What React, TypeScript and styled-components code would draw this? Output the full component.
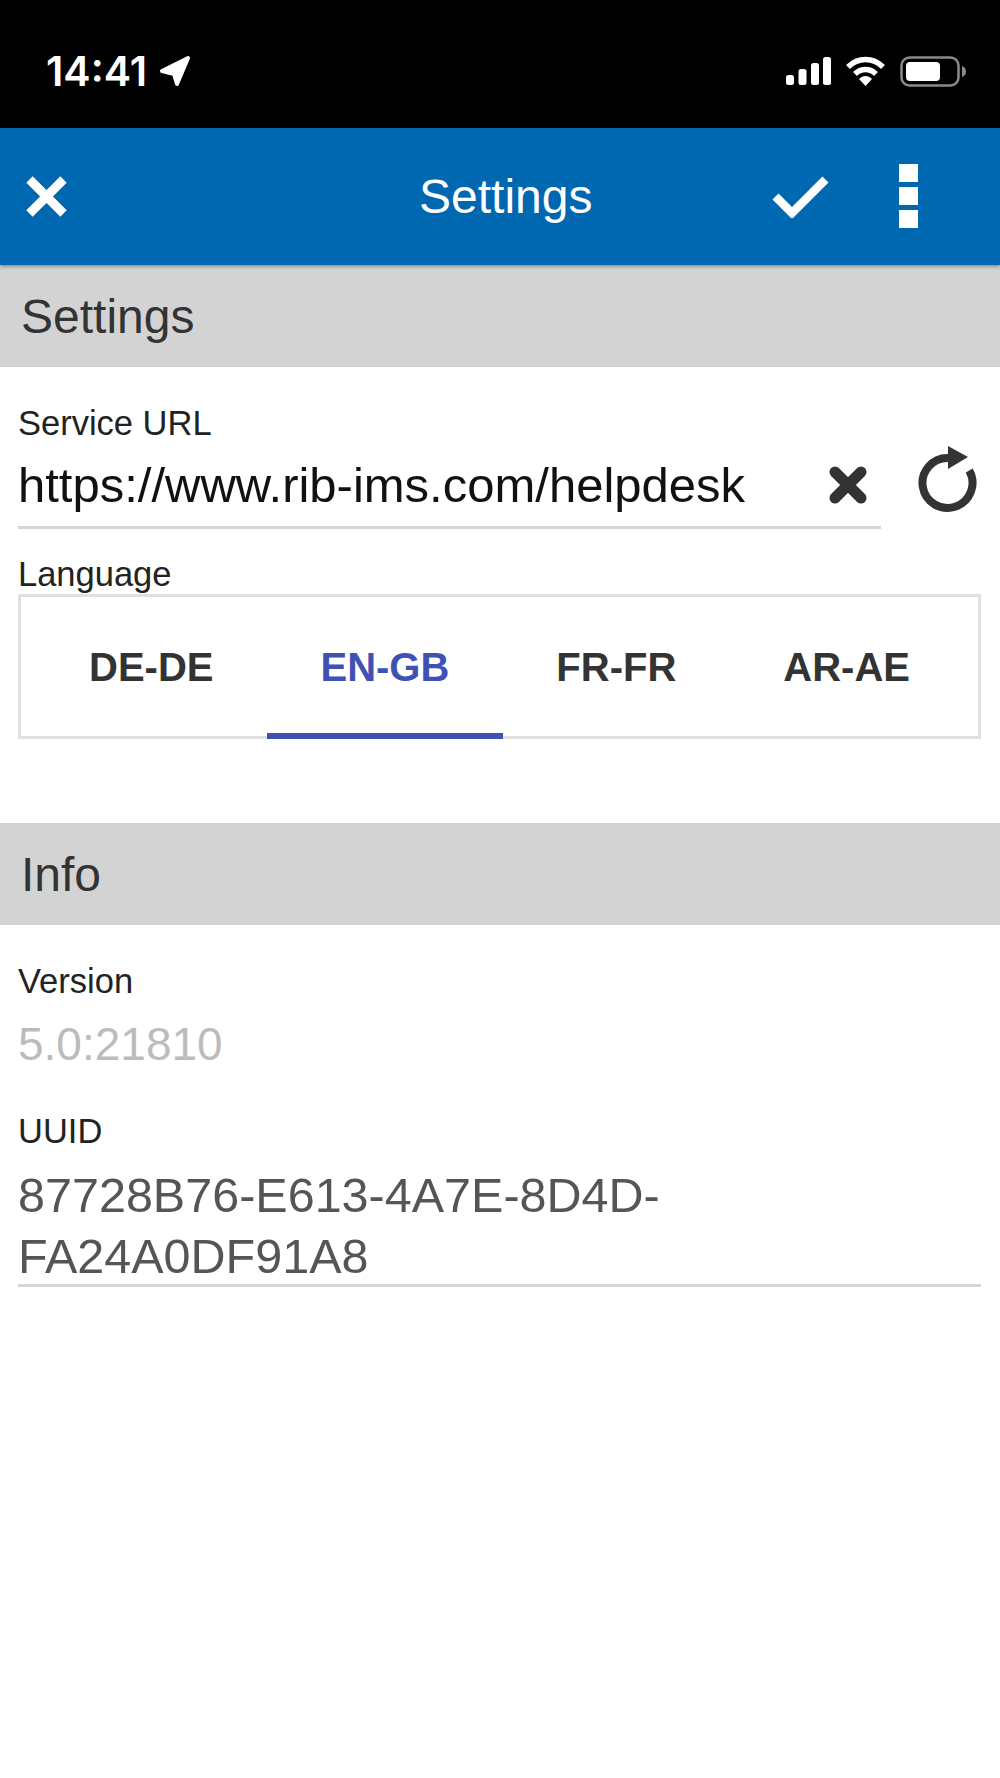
import React from "react";
import styled, { createGlobalStyle } from "styled-components";

const GlobalStyle = createGlobalStyle`
  html, body {
    margin: 0;
    padding: 0;
    background: #ffffff;
    font-family: "Liberation Sans", Arial, sans-serif;
  }
`;

const Page = styled.div`
  width: 1000px;
  height: 1778px;
  overflow: hidden;
  background: #ffffff;
`;

const StatusBar = styled.div`
  height: 128px;
  background: #000000;
  display: flex;
  align-items: center;
  padding: 14px 34px 0 46px;
  box-sizing: border-box;
  color: #ffffff;
`;

const Clock = styled.span`
  font-family: Inter, "Liberation Sans", sans-serif;
  font-weight: 600;
  font-size: 41px;
  line-height: 44px;
  margin-right: 12px;
`;

const StatusIcons = styled.div`
  margin-left: auto;
  display: flex;
  align-items: center;
  gap: 14px;
`;

const Toolbar = styled.header`
  position: relative;
  z-index: 1;
  height: 137px;
  background: #0067b1;
  box-shadow: 0 1px 4px rgba(0, 0, 0, 0.45);
  display: flex;
  align-items: center;
  padding-left: 26px;
  box-sizing: border-box;
  color: #ffffff;
`;

const ToolbarTitle = styled.h1`
  margin: 0 0 0 352px;
  width: 353px;
  font-size: 48px;
  font-weight: 400;
  line-height: 60px;
`;

const MenuDots = styled.div`
  margin: -2px 0 0 70px;
  display: flex;
  flex-direction: column;
  gap: 5px;
`;

const MenuDot = styled.span`
  display: block;
  width: 19px;
  height: 18px;
  background: #ffffff;
`;

const SectionBar = styled.h2`
  margin: 0;
  height: 102px;
  background: #d3d3d3;
  color: #333333;
  font-size: 48px;
  font-weight: 400;
  line-height: 104px;
  padding-left: 21px;
`;

const Form = styled.section<{ $height: number }>`
  height: ${(p) => p.$height}px;
  padding: 36px 19px 0 18px;
  box-sizing: border-box;
`;

const FieldLabel = styled.div`
  font-size: 34.5px;
  line-height: 40px;
  color: #222222;
`;

const LanguageLabel = styled(FieldLabel)`
  margin-top: 25px;
`;

const UrlRow = styled.div`
  display: flex;
  align-items: flex-start;
`;

const UrlInput = styled.div`
  width: 863px;
  height: 86px;
  box-sizing: border-box;
  border-bottom: 3px solid #d6d6d6;
  display: flex;
  align-items: flex-start;
  justify-content: space-between;
  padding: 14px 14px 0 0;
`;

const UrlText = styled.span`
  font-size: 49px;
  line-height: 56px;
  color: #111111;
`;

const TabBox = styled.div`
  height: 145px;
  box-sizing: border-box;
  border: 3px solid #e0e0e0;
  display: flex;
  justify-content: center;
`;

const Tab = styled.div<{ $active?: boolean }>`
  padding: 4px 53.5px 0;
  display: flex;
  align-items: center;
  height: 142px;
  box-sizing: border-box;
  font-size: 40px;
  font-weight: 700;
  color: ${(p) => (p.$active ? "#3f51b5" : "#333333")};
  border-bottom: 6px solid ${(p) => (p.$active ? "#3f51b5" : "transparent")};
`;

const VersionValue = styled.div`
  font-size: 46px;
  line-height: 60px;
  color: #bcbcbc;
  margin: 13px 0 37px;
`;

const UuidValue = styled.div`
  font-size: 48.5px;
  line-height: 60.5px;
  color: #555555;
  width: 700px;
  padding-top: 14px;
`;

const UuidRule = styled.div`
  height: 3px;
  background: #d6d6d6;
  margin-top: -2px;
`;

const TABS = ["DE-DE", "EN-GB", "FR-FR", "AR-AE"];

const LocationIcon = () => (
  <svg width="32" height="32" viewBox="0 0 32 32" style={{ display: "block" }}>
    <path
      d="M29 3 3 16 15 19 18 29Z"
      fill="#fff"
      stroke="#fff"
      strokeWidth="4"
      strokeLinejoin="round"
    />
  </svg>
);

const SignalIcon = () => (
  <svg width="45" height="28" viewBox="0 0 45 28" style={{ display: "block" }}>
    <rect x="0" y="18" width="8" height="10" rx="2.5" fill="#fff" />
    <rect x="12.5" y="12" width="8" height="16" rx="2.5" fill="#fff" />
    <rect x="25" y="6" width="8" height="22" rx="2.5" fill="#fff" />
    <rect x="37" y="0" width="8" height="28" rx="2.5" fill="#fff" />
  </svg>
);

const WifiIcon = () => (
  <svg width="41" height="30" viewBox="0 0 41 30" style={{ display: "block" }}>
    <path d="M3 11C13 1 28 1 38 11" fill="none" stroke="#fff" strokeWidth="5.5" />
    <path d="M10 18C16 12 25 12 31 18" fill="none" stroke="#fff" strokeWidth="5.5" />
    <path d="M14 23C18 19 23 19 27 23L20.5 30Z" fill="#fff" />
  </svg>
);

const BatteryIcon = () => (
  <svg width="66" height="31" viewBox="0 0 66 31" style={{ display: "block" }}>
    <rect x="1.5" y="1.5" width="57" height="28" rx="8" fill="none" stroke="#8a8a8a" strokeWidth="2.5" />
    <rect x="6" y="6" width="34" height="19" rx="4" fill="#fff" />
    <path d="M62 10C65 11 66 13 66 15.5S65 20 62 21Z" fill="#8a8a8a" />
  </svg>
);

const CloseIcon = () => (
  <svg width="41" height="41" viewBox="0 0 41 41" style={{ display: "block" }}>
    <path d="M3.5 3.5 37.5 37.5M37.5 3.5 3.5 37.5" stroke="#fff" strokeWidth="9" />
  </svg>
);

const CheckIcon = () => (
  <svg width="57" height="42" viewBox="0 0 57 42" style={{ display: "block" }}>
    <path d="M3.5 20.5 20 37 53.5 3.5" fill="none" stroke="#fff" strokeWidth="8.5" />
  </svg>
);

const ClearIcon = () => (
  <svg width="38" height="38" viewBox="0 0 38 38" style={{ display: "block", marginTop: 9 }}>
    <path d="M6 6 32 32M32 6 6 32" stroke="#333" strokeWidth="11" strokeLinecap="round" />
  </svg>
);

const ReloadIcon = () => (
  <svg width="62" height="68" viewBox="0 0 62 68" style={{ display: "block", marginLeft: 37, marginTop: 3 }}>
    <path d="M51.2 24.6A25 25 0 1 1 30 12" fill="none" stroke="#333" strokeWidth="8" />
    <path d="M30 0 50 11 30 23Z" fill="#333" />
  </svg>
);

export default function App() {
  return (
    <Page>
      <GlobalStyle />
      <StatusBar>
        <Clock>14:41</Clock>
        <LocationIcon />
        <StatusIcons>
          <SignalIcon />
          <WifiIcon />
          <BatteryIcon />
        </StatusIcons>
      </StatusBar>
      <Toolbar>
        <CloseIcon />
        <ToolbarTitle>Settings</ToolbarTitle>
        <CheckIcon />
        <MenuDots>
          <MenuDot />
          <MenuDot />
          <MenuDot />
        </MenuDots>
      </Toolbar>
      <SectionBar>Settings</SectionBar>
      <Form $height={456}>
        <FieldLabel>Service URL</FieldLabel>
        <UrlRow>
          <UrlInput>
            <UrlText>https://www.rib-ims.com/helpdesk</UrlText>
            <ClearIcon />
          </UrlInput>
          <ReloadIcon />
        </UrlRow>
        <LanguageLabel>Language</LanguageLabel>
        <TabBox>
          {TABS.map((tab) => (
            <Tab key={tab} $active={tab === "EN-GB"}>
              {tab}
            </Tab>
          ))}
        </TabBox>
      </Form>
      <SectionBar>Info</SectionBar>
      <Form $height={400}>
        <FieldLabel>Version</FieldLabel>
        <VersionValue>5.0:21810</VersionValue>
        <FieldLabel>UUID</FieldLabel>
        <UuidValue>
          87728B76-E613-4A7E-8D4D-
          <br />
          FA24A0DF91A8
        </UuidValue>
        <UuidRule />
      </Form>
    </Page>
  );
}
